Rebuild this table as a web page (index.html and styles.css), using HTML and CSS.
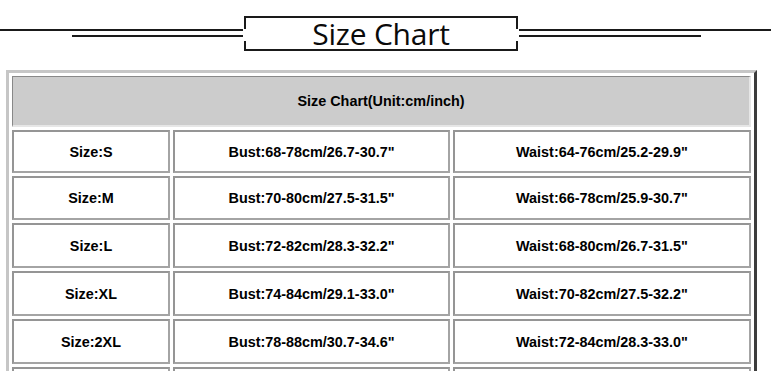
FILE: index.html
```html
<!DOCTYPE html>
<html lang="en">
<head>
<meta charset="utf-8">
<title>Size Chart</title>
<link rel="stylesheet" href="styles.css">
</head>
<body>
<header class="title-row">
  <div class="rule rule-left">
    <span class="line line-full"></span>
    <span class="line line-short"></span>
  </div>
  <div class="title-box"><h1 class="title">Size Chart</h1></div>
  <div class="rule rule-right">
    <span class="line line-full"></span>
    <span class="line line-short"></span>
  </div>
</header>
<table class="chart">
  <colgroup>
    <col class="col-size">
    <col class="col-bust">
    <col class="col-waist">
  </colgroup>
  <thead>
    <tr class="head-row"><th colspan="3">Size Chart(Unit:cm/inch)</th></tr>
  </thead>
  <tbody>
    <tr class="r1"><td>Size:S</td><td>Bust:68-78cm/26.7-30.7"</td><td>Waist:64-76cm/25.2-29.9"</td></tr>
    <tr class="r2"><td>Size:M</td><td>Bust:70-80cm/27.5-31.5"</td><td>Waist:66-78cm/25.9-30.7"</td></tr>
    <tr class="r3"><td>Size:L</td><td>Bust:72-82cm/28.3-32.2"</td><td>Waist:68-80cm/26.7-31.5"</td></tr>
    <tr class="r3"><td>Size:XL</td><td>Bust:74-84cm/29.1-33.0"</td><td>Waist:70-82cm/27.5-32.2"</td></tr>
    <tr class="r3"><td>Size:2XL</td><td>Bust:78-88cm/30.7-34.6"</td><td>Waist:72-84cm/28.3-33.0"</td></tr>
    <tr class="r3" aria-hidden="true"><td></td><td></td><td></td></tr>
  </tbody>
</table>
</body>
</html>
```
FILE: styles.css
```css
html, body {
  margin: 0;
  padding: 0;
  background: #ffffff;
  overflow: hidden;
}

body {
  font-family: "Liberation Sans", Arial, sans-serif;
  color: #000;
}

.title-row {
  display: flex;
  align-items: center;
  margin-top: 16px;
  height: 35px;
}

.rule {
  display: flex;
  flex-direction: column;
  gap: 4px;
  margin-top: -1px;
}

.rule-left {
  width: 243px;
  align-items: flex-end;
  margin-right: 1px;
}

.rule-right {
  flex: 1;
  align-items: flex-start;
  margin-left: 1px;
}

.line {
  display: block;
  height: 2px;
  background: #1a1a1a;
}

.line-full { width: 100%; }
.rule-left .line-short { width: 171px; }
.rule-right .line-short { width: 182px; }

.title-box {
  position: relative;
  box-sizing: border-box;
  width: 274px;
  height: 35px;
  border: 2px solid #1a1a1a;
  display: flex;
  align-items: center;
  justify-content: center;
}

.title-box::before,
.title-box::after {
  content: "";
  position: absolute;
  top: 11px;
  width: 2px;
  height: 12px;
  background: #fff;
}
.title-box::before { left: -2px; }
.title-box::after { right: -2px; }

.title {
  margin: 0;
  font-family: "Open Sans", "Noto Sans", sans-serif;
  font-weight: 400;
  font-size: 30px;
  line-height: 1;
  letter-spacing: -0.2px;
  color: #0a0a0a;
  padding-top: 1px;
}

.chart {
  margin: 19px 0 0 6px;
  box-sizing: border-box;
  width: 751px;
  table-layout: fixed;
  border-collapse: separate;
  border-spacing: 3px;
  border-style: solid;
  border-width: 3px;
  border-color: #c6c6c6 #3c3c3c #3c3c3c #c6c6c6;
}

.col-size { width: 158px; }
.col-bust { width: 277px; }
.col-waist { width: 298px; }

.chart th,
.chart td {
  box-sizing: border-box;
  padding: 0;
  text-align: center;
  vertical-align: middle;
  font-weight: 700;
  font-size: 14.4px;
  border: 2px solid #a4a4a4;
  border-top-color: #959595;
  border-left-color: #959595;
  background: #fff;
}

.head-row th {
  height: 51px;
  background: #cccccc;
  border-color: #888 #e6e6e6 #e6e6e6 #888;
  border-width: 1px 2px 2px 1px;
}

.r1 td { height: 43px; }
.r2 td { height: 44px; }
.r3 td { height: 45px; }
```
